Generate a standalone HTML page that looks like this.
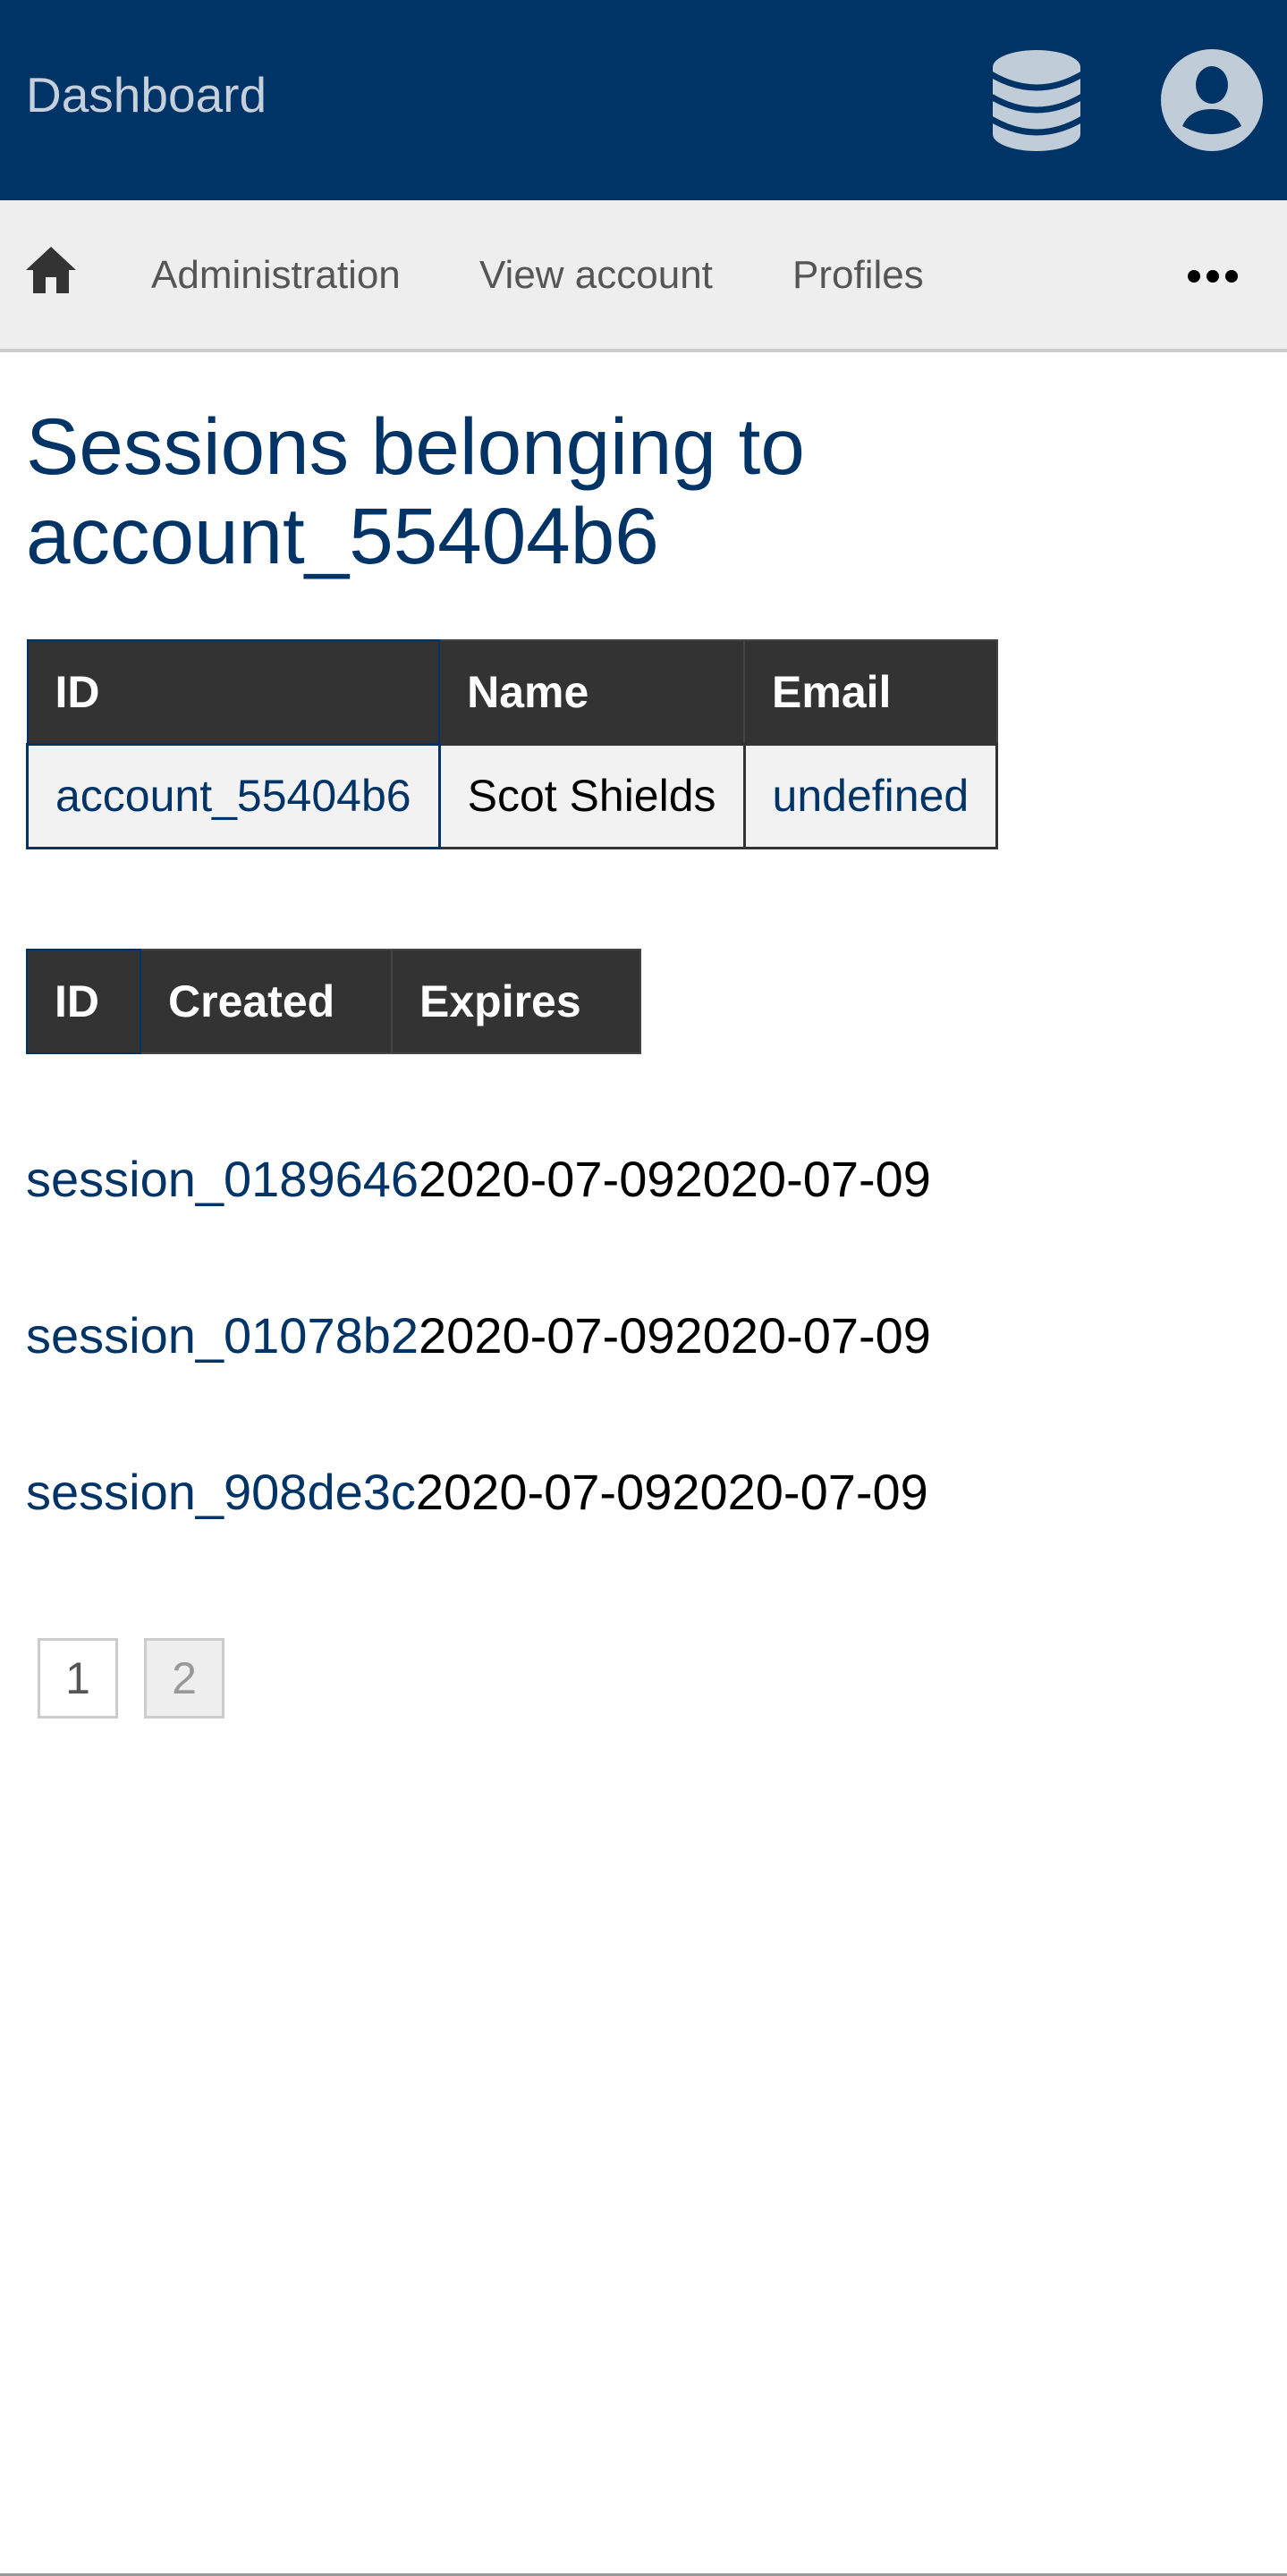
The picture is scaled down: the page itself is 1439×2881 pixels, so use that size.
<!DOCTYPE html>
<html><head><meta charset="utf-8"><style>
*{margin:0;padding:0;box-sizing:border-box}
html,body{width:1439px;height:2881px;background:#fff;font-family:"Liberation Sans",Arial,sans-serif;overflow:hidden;position:relative}
.a{position:absolute;white-space:nowrap}
#hdr{left:0;top:0;width:1439px;height:224px;background:#003366}
#nav{left:0;top:224px;width:1439px;height:170px;background:#eeeeee;border-bottom:4px solid #cccccc}
.nv{font-size:44px;color:#555;top:281px;line-height:54px}
h1{position:absolute;left:29px;top:449px;font-size:89px;font-weight:normal;color:#003366;line-height:100px}
table{position:absolute;border-collapse:collapse;font-size:50px}
td,th{height:116px;padding:0 30px;text-align:left;white-space:nowrap}
th{background:#333;color:#fff;font-weight:bold;border:2px solid #444}
td{background:#f2f2f2;border:3px solid #333;color:#000}
.blue{color:#003366}
.s{font-size:56px;left:29px;line-height:64px}
.pg{width:90px;height:90px;border:3px solid #ccc;font-size:50px;line-height:84px;text-align:center}
</style></head><body>
<div id="hdr" class="a"></div>
<div class="a" style="left:29px;top:74px;font-size:55px;color:#c5d0dc;line-height:64px">Dashboard</div>
<svg class="a" style="left:1110px;top:55px" width="98" height="115" viewBox="0 0 98 115">
<path d="M0 20 A49 19 0 0 1 98 20 V95 A49 19 0 0 1 0 95Z" fill="#c0ccd8"/>
<g fill="none" stroke="#003366" stroke-width="7">
<path d="M-2 28 Q49 58 100 28"/>
<path d="M-2 53 Q49 83 100 53"/>
<path d="M-2 78 Q49 108 100 78"/>
</g></svg>
<svg class="a" style="left:1298px;top:55px" width="114" height="114" viewBox="0 0 114 114">
<circle cx="57" cy="57" r="57" fill="#c0ccd8"/>
<ellipse cx="57" cy="40" rx="18" ry="21" fill="#003366"/>
<path d="M24 86 Q32 67 57 67 Q82 67 90 86 Q57 104 24 86Z" fill="#003366"/>
</svg>
<div id="nav" class="a"></div>
<svg class="a" style="left:29px;top:276px" width="56" height="52" viewBox="0 0 56 52">
<path d="M28 0 L56 26 H48 V52 H34 V34 H22 V52 H8 V26 H0Z" fill="#333"/>
</svg>
<div class="a nv" style="left:169px">Administration</div>
<div class="a nv" style="left:536px">View account</div>
<div class="a nv" style="left:886px">Profiles</div>
<div class="a" style="left:1327px;top:300px;font-size:20px">
<svg width="58" height="16"><circle cx="8" cy="8" r="7"/><circle cx="29" cy="8" r="7"/><circle cx="50" cy="8" r="7"/></svg></div>
<h1>Sessions belonging to<br>account_55404b6</h1>
<table style="left:29px;top:715px;width:1087px">
<tr><th style="width:464px;border-color:#003366">ID</th><th style="width:338px">Name</th><th>Email</th></tr>
<tr><td class="blue" style="border-color:#003366">account_55404b6</td><td>Scot Shields</td><td class="blue">undefined</td></tr>
</table>
<table style="left:29px;top:1061px;width:688px">
<tr><th style="width:127px;border-color:#003366">ID</th><th style="width:281px">Created</th><th>Expires</th></tr>
</table>
<div class="a s" style="top:1287px"><span class="blue">session_0189646</span>2020-07-092020-07-09</div>
<div class="a s" style="top:1462px"><span class="blue">session_01078b2</span>2020-07-092020-07-09</div>
<div class="a s" style="top:1637px"><span class="blue">session_908de3c</span>2020-07-092020-07-09</div>
<div class="a pg" style="left:42px;top:1832px;color:#555">1</div>
<div class="a pg" style="left:161px;top:1832px;background:#eee;color:#999">2</div>
<div class="a" style="left:0;top:2878px;width:1439px;height:3px;background:#999"></div>
</body></html>
